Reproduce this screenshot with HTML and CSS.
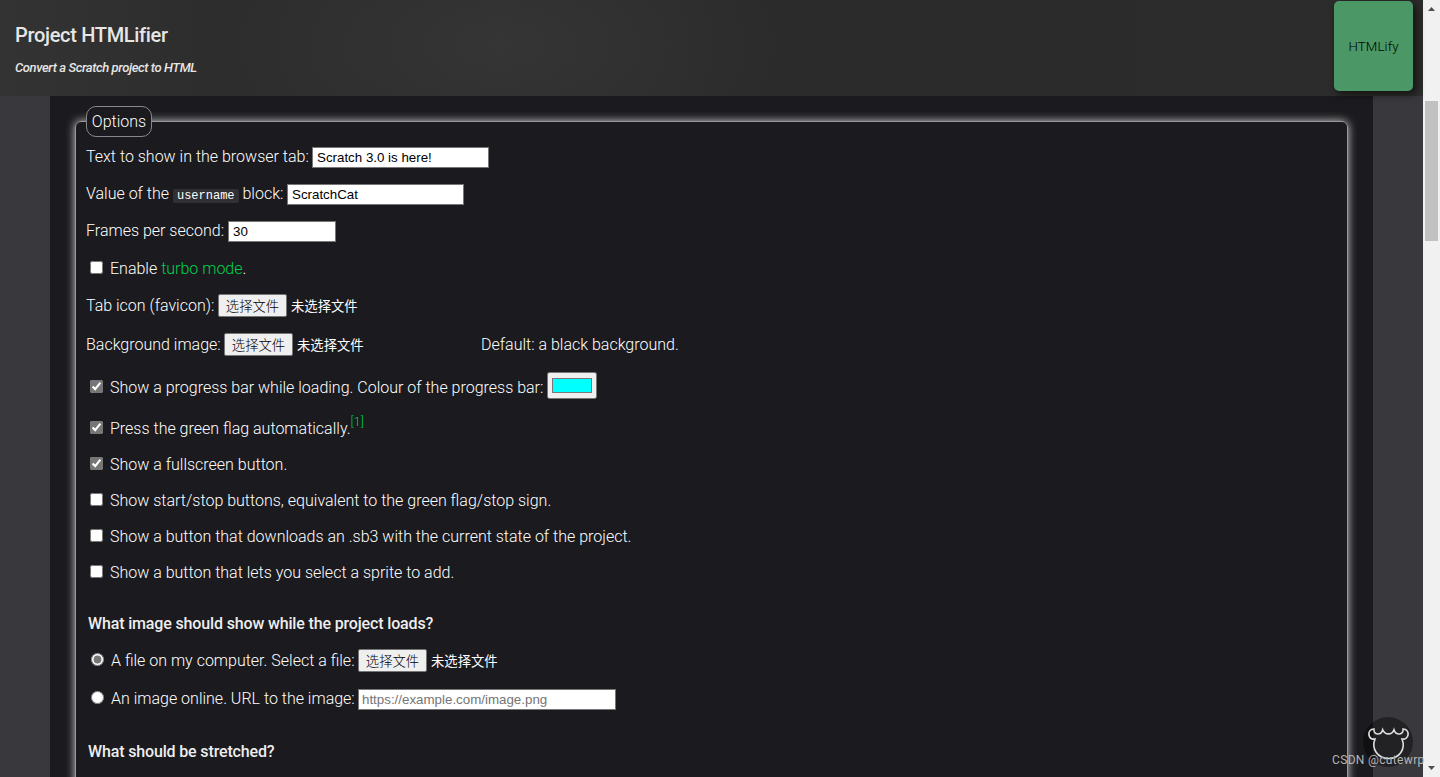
FILE: index.html
```html
<!DOCTYPE html>
<html lang="en">
  <head>
    <meta charset="UTF-8" />
    <meta name="viewport" content="width=device-width, initial-scale=1" />
    <title>Project HTMLifier</title>
    <link rel="stylesheet" href="styles.css">
  </head>
  <body>
    <div class="page">
      <header>
        <div class="titles">
          <h1>Project HTMLifier</h1>
          <p class="tagline">Convert a Scratch project to HTML</p>
        </div>
        <button class="htmlify">HTMLify</button>
      </header>

      <main>
        <div class="options">
          <div class="legend">Options</div>

          <label class="row">
            <span class="t1 raised">Text to show in the browser tab:</span>
            <input class="field" type="text" value="Scratch 3.0 is here!" />
          </label>
          <label class="row">
            <span class="t2">Value of the <code>username</code> block:</span>
            <input class="field" type="text" value="ScratchCat" />
          </label>
          <label class="row">
            <span class="t3 raised">Frames per second:</span>
            <input class="field number" type="text" value="30" />
          </label>
          <label class="row">
            <input type="checkbox" />
            <span>Enable <a href="#">turbo mode</a>.</span>
          </label>
          <div class="row file-row">
            <span class="t4">Tab icon (favicon):</span>
            <button class="file">选择文件</button>
            <span class="file-name">未选择文件</span>
          </div>
          <div class="row background-row">
            <span class="t5">Background image:</span>
            <button class="file">选择文件</button>
            <span class="file-name wide">未选择文件</span>
            <span>Default: a black background.</span>
          </div>
          <label class="row colour-row">
            <input type="checkbox" checked />
            <span class="t6">Show a progress bar while loading. Colour of the progress bar:</span>
            <input class="colour" type="color" value="#00ffff" />
          </label>
          <label class="row flag-row">
            <input type="checkbox" checked />
            <span>Press the green flag automatically.<sup><a href="#">[1]</a></sup></span>
          </label>
          <label class="row short">
            <input type="checkbox" checked />
            <span>Show a fullscreen button.</span>
          </label>
          <label class="row short">
            <input type="checkbox" />
            <span>Show start/stop buttons, equivalent to the green flag/stop sign.</span>
          </label>
          <label class="row short">
            <input type="checkbox" />
            <span>Show a button that downloads an .sb3 with the current state of the project.</span>
          </label>
          <label class="row short">
            <input type="checkbox" />
            <span>Show a button that lets you select a sprite to add.</span>
          </label>

          <h2>What image should show while the project loads?</h2>
          <div class="row file-row radio-row">
            <input type="radio" name="image" checked />
            <span class="t7">A file on my computer. Select a file:</span>
            <button class="file">选择文件</button>
            <span class="file-name">未选择文件</span>
          </div>
          <label class="row file-row radio-row">
            <input type="radio" name="image" />
            <span class="t7">An image online. URL to the image:</span>
            <input class="field url" type="text" placeholder="https://example.com/image.png" />
          </label>

          <h2>What should be stretched?</h2>
        </div>
      </main>
    </div>

    <div class="scrollbar">
      <svg class="arrow" viewBox="0 0 17 17"><path d="M5 11h7L8.500 7z" /></svg>
      <div class="thumb"></div>
      <svg class="arrow down" viewBox="0 0 17 17"><path d="M5 6h7L8.500 10z" /></svg>
    </div>

    <div class="mascot">
      <svg viewBox="0 0 50 50">
        <path d="M11 12C7 12 5.500 15 6 18c.5 3 3 4.500 6 4C8 32 15 41.500 25.700 41.500S43 32 39 22c3 .5 5.500-1 6-4 .5-3-1-6-5-6 1 6-7 7-9 .7-2 5.600-9 5.600-11.300 0C18 19 10 18 11 12z" />
      </svg>
    </div>
    <div class="watermark">CSDN @cutewrp</div>
  </body>
</html>
```

FILE: styles.css
```css
* {
  box-sizing: border-box;
}

body {
  margin: 0;
  display: flex;
  height: 777px;
  overflow: hidden;
  background: #39383d;
  color: #fff;
  font-family: Roboto, "Noto Sans CJK SC", sans-serif;
  font-size: 16px;
  font-weight: 300;
}

.page {
  flex: 1;
  display: flex;
  flex-direction: column;
  min-width: 0;
}

header {
  height: 96px;
  flex-shrink: 0;
  display: flex;
  justify-content: space-between;
  padding: 1px 10px 0 15px;
  background:
    radial-gradient(ellipse 280px 150px at 500px 45px, #353535, transparent),
    linear-gradient(90deg, #333, #2d2d2d 15%, #2b2b2b 60%, #2c2c2c);
  z-index: 1;
}

h1 {
  margin: 22px 0 0;
  color: #e6e6e6;
  font-size: 20px;
  line-height: 24px;
  font-weight: 500;
  letter-spacing: -0.32px;
}

.tagline {
  margin: 13px 0 0;
  color: #e6e6e6;
  font-size: 13px;
  line-height: 16px;
  font-weight: 500;
  font-style: italic;
  letter-spacing: -0.4px;
}

.htmlify {
  width: 79px;
  height: 90px;
  padding: 0;
  border: none;
  border-radius: 5px;
  background: #4c9766;
  box-shadow: 3px 3px 8px rgba(0, 0, 0, 0.6);
  color: #000;
  font-family: Roboto, sans-serif;
  font-size: 13.333px;
  font-weight: 300;
  letter-spacing: 0.1px;
}

main {
  flex: 1;
  min-height: 0;
  margin: 0 50px;
  padding: 25px 25px 0;
  background: #1b1a1e;
  overflow: hidden;
}

.options {
  height: 760px;
  padding: 0 10px;
  border: 1px solid #999;
  border-radius: 6px;
  box-shadow: 0 0 10px #ccc;
}

.legend {
  width: 66px;
  height: 31px;
  margin: -16px 0 2px;
  border: 1px solid #88888a;
  border-radius: 10px;
  background: #1b1a1e;
  line-height: 29px;
  text-align: center;
}

.row {
  display: flex;
  align-items: center;
  height: 37px;
  white-space: nowrap;
}

.row > span {
  line-height: 20px;
}

.row > .raised {
  padding-bottom: 2px;
}

.file-row {
  height: 38px;
}

.file-row .file {
  margin-bottom: 1px;
}

.background-row {
  height: 39px;
}

.colour-row {
  height: 43px;
}

.colour-row > span {
  padding-top: 4px;
}

.colour-row input[type="checkbox"] {
  margin-bottom: -1px;
}

.flag-row {
  height: 39px;
  padding-top: 2px;
}

.flag-row input[type="checkbox"] {
  margin-bottom: 0;
}

.short {
  height: 36px;
}

.flag-row > span,
.short > span {
  padding-top: 2px;
}

.radio-row {
  padding-left: 1px;
}

.radio-row input[type="radio"] {
  margin-bottom: 3px;
}

.t1 { width: 226px; }
.t2 { width: 201px; }
.t3 { width: 142px; }
.t4 { width: 132px; }
.t5 { width: 138px; }
.t6 { width: 437px; }
.t7 { width: 247px; }

a {
  color: #00d250;
  text-decoration: none;
}

code {
  padding: 0 4px;
  border-radius: 2px;
  background: #303035;
  font-family: "Liberation Mono", monospace;
  font-size: 12px;
}

sup {
  position: relative;
  top: -1px;
  font-size: 13px;
  line-height: 0;
}

input[type="checkbox"],
input[type="radio"] {
  width: 13px;
  height: 13px;
  margin: 0 7px 2px 4px;
  accent-color: #767676;
}

.field {
  width: 177px;
  height: 21px;
  padding: 1px 3px 1px 4px;
  border: 1px solid #767676;
  background: #fff;
  color: #000;
  font-family: "Liberation Sans", Arial, sans-serif;
  font-size: 13.333px;
  font-weight: 400;
}

.number {
  width: 108px;
}

.url {
  width: 258px;
  padding-left: 3px;
}

.field::placeholder {
  color: #757575;
}

.file {
  width: 69px;
  height: 23px;
  padding: 0;
  border: 1px solid #767676;
  border-radius: 2px;
  background: #efefef;
  color: #000;
  font-family: "Noto Sans CJK SC", sans-serif;
  font-size: 13.333px;
  font-weight: 300;
  line-height: 20px;
}

.file-name {
  margin-left: 4px;
  font-family: "Noto Sans CJK SC", sans-serif;
  font-size: 13.333px;
  font-weight: 400;
}

.wide {
  width: 184px;
}

.colour {
  width: 50px;
  height: 27px;
  margin: 0;
}

h2 {
  margin: 16px 0 0 2px;
  color: #eee;
  font-size: 16px;
  line-height: 36px;
  font-weight: 500;
  letter-spacing: -0.15px;
}

.scrollbar {
  width: 17px;
  display: flex;
  flex-direction: column;
  background: #f1f1f1;
}

.arrow {
  width: 17px;
  height: 17px;
  fill: #505050;
}

.thumb {
  width: 13px;
  height: 140px;
  margin: 84px 2px auto;
  background: #c1c1c1;
}

.mascot {
  position: absolute;
  left: 1363px;
  top: 717px;
  width: 50px;
  height: 50px;
  border-radius: 50%;
  background: rgba(0, 0, 0, 0.4);
}

.mascot path {
  fill: none;
  stroke: #ddd;
  stroke-width: 1.6;
}

.watermark {
  position: absolute;
  left: 1332px;
  top: 752px;
  color: #b5b5b5;
  font-size: 12px;
  font-weight: 400;
  line-height: 16px;
  letter-spacing: 0.35px;
  z-index: 2;
}
```
